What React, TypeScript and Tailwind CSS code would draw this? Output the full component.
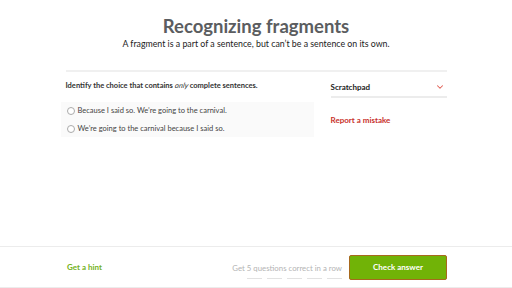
import { ChevronDown } from "lucide-react";

const choices = [
  "Because I said so. We’re going to the carnival.",
  "We’re going to the carnival because I said so.",
];

export default function App() {
  return (
    <div className="flex h-[288px] w-[512px] flex-col bg-white font-['Lato',sans-serif]">
      <header className="pt-[15px] text-center">
        <h1 className="text-[18.5px] font-bold leading-[22px] text-[#5b5d60]">
          Recognizing fragments
        </h1>
        <p className="mt-[1px] text-[8.8px] leading-[12px] text-[#222]">
          A fragment is a part of a sentence, but can’t be a sentence on its own.
        </p>
      </header>

      <main className="mx-auto mt-[20px] w-[381px] flex-1 border-t-2 border-[#f0f0f0]">
        <div className="flex gap-[17px]">
          <div className="w-[248px]">
            <p className="mt-[9px] text-[7.5px] font-bold leading-[10px] text-[#333]">
              Identify the choice that contains{" "}
              <em className="inline-block -skew-x-12 font-normal">only</em> complete sentences.
            </p>
            <div className="-ml-[5px] mt-[11px] flex flex-col gap-[6px] bg-[#fafafa] pb-[2px] pl-[6px] pt-[3px]">
              {choices.map((choice) => (
                <label key={choice} className="flex items-center gap-[3px]">
                  <span className="h-[8px] w-[8px] rounded-full border border-[#aaa] bg-white" />
                  <span className="text-[7.5px] leading-[12px] text-[#444]">{choice}</span>
                </label>
              ))}
            </div>
          </div>

          <div className="w-[116px]">
            <div className="mt-[9px] flex items-center justify-between border-b-2 border-[#ececec] pb-[3px]">
              <span className="text-[8px] font-bold leading-[12px] text-[#222]">Scratchpad</span>
              <ChevronDown size={10} strokeWidth={2.5} className="mr-[2px] text-[#e05a4f]" />
            </div>
            <p className="mt-[16px] text-[8px] font-bold leading-[12px] text-[#c8312b]">
              Report a mistake
            </p>
          </div>
        </div>
      </main>

      <footer className="flex h-[42px] items-center border-y border-[#ececec] pl-[67px] pr-[65px]">
        <span className="text-[8px] font-bold text-[#74b222]">Get a hint</span>
        <div className="ml-auto mr-[7px] flex flex-col items-end pt-[8px]">
          <span className="text-[7.8px] leading-[11px] text-[#b4b4b4]">
            Get 5 questions correct in a row
          </span>
          <div className="mt-[4px] flex gap-[5px]">
            {[0, 1, 2, 3, 4].map((i) => (
              <span key={i} className="h-[1px] w-[15px] bg-[#e2e2e2]" />
            ))}
          </div>
        </div>
        <button className="h-[25px] w-[98px] rounded-[2px] border border-[#a7691d] bg-[#71b307] text-[8px] font-bold text-white">
          Check answer
        </button>
      </footer>
    </div>
  );
}
